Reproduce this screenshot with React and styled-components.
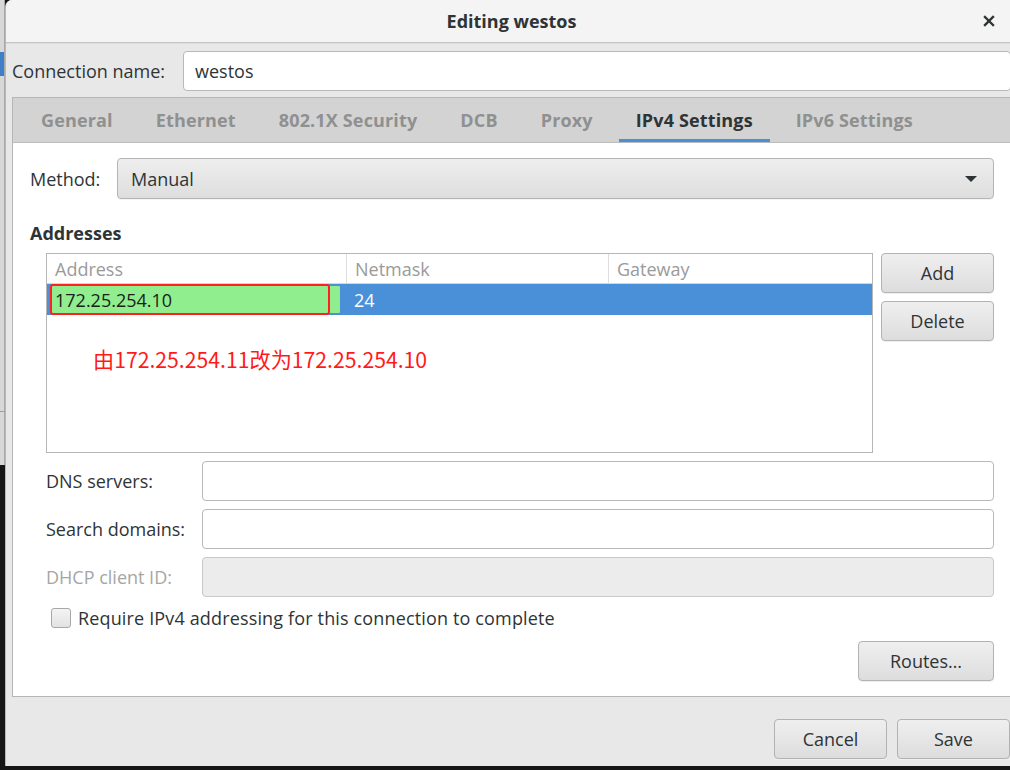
import React from 'react';
import styled, { createGlobalStyle } from 'styled-components';

const GlobalStyle = createGlobalStyle`
  html, body {
    margin: 0;
    padding: 0;
    overflow: hidden;
    background: #161616;
  }
  * {
    box-sizing: border-box;
  }
`;

const Screen = styled.div`
  width: 1010px;
  height: 770px;
  display: flex;
  overflow: hidden;
  background: #161616;
  font-family: 'Open Sans', 'Noto Sans', sans-serif;
  font-size: 18px;
  color: #2e3436;
`;

const BackWindow = styled.div`
  width: 5px;
  flex-shrink: 0;
  height: 465px;
  display: flex;
  flex-direction: column;
  background: #d8d8d8;
  border-right: 1px solid #a8a8a8;
`;

const BackStripe = styled.div`
  margin-top: ${p => p.top}px;
  height: ${p => p.h}px;
  background: ${p => p.color};
`;

const Dialog = styled.div`
  width: 1012px;
  height: 766px;
  flex-shrink: 0;
  display: flex;
  flex-direction: column;
  background: #e8e8e8;
  border-left: 1px solid #b8b8b8;
  border-radius: 7px 0 0 0;
  overflow: hidden;
`;

const TitleBar = styled.div`
  height: 43px;
  flex-shrink: 0;
  display: flex;
  align-items: center;
  justify-content: center;
  position: relative;
  background: #f4f4f4;
  border-bottom: 1px solid #c4c4c4;
  box-shadow: 0 1px 0 #dcdcdc;
`;

const Title = styled.div`
  font-weight: 700;
  font-size: 18px;
  color: #2e3436;
`;

const CloseButton = styled.div`
  position: absolute;
  right: 22px;
  top: 15px;
  width: 12px;
  height: 12px;
  display: flex;
`;

const Body = styled.div`
  flex: 1;
  display: flex;
  flex-direction: column;
  padding: 7px 0 0 6px;
`;

const NameRow = styled.div`
  display: flex;
  align-items: center;
  padding-right: 6px;
  height: 41px;
`;

const NameLabel = styled.div`
  width: 171px;
  flex-shrink: 0;
`;

const Entry = styled.div`
  flex: 1;
  height: 40px;
  display: flex;
  align-items: center;
  padding: 0 11px;
  background: ${p => (p.disabled ? '#ececec' : '#ffffff')};
  border: 1px solid ${p => (p.disabled ? '#c8c8c8' : '#b8b8b8')};
  border-radius: 4px;
  color: #2e3436;
`;

const Notebook = styled.div`
  margin-top: 6px;
  height: 600px;
  display: flex;
  flex-direction: column;
  border: 1px solid #b6b6b6;
  border-right: none;
  background: #ffffff;
`;

const TabBar = styled.div`
  height: 45px;
  flex-shrink: 0;
  display: flex;
  align-items: stretch;
  gap: 9px;
  padding-left: 11px;
  background: #d3d3d3;
  border-bottom: 1px solid #bdbdbd;
`;

const Tab = styled.div`
  display: flex;
  align-items: center;
  padding: 0 17px;
  font-weight: 700;
  letter-spacing: 0.15px;
  color: ${p => (p.active ? '#2e3436' : '#8f9090')};
  box-shadow: ${p => (p.active ? 'inset 0 -3px 0 #4a90d9' : 'none')};
`;

const Panel = styled.div`
  flex: 1;
  display: flex;
  flex-direction: column;
  padding: 15px 23px 0 17px;
`;

const MethodRow = styled.div`
  display: flex;
  align-items: center;
`;

const MethodLabel = styled.div`
  width: 87px;
  flex-shrink: 0;
`;

const Combo = styled.div`
  flex: 1;
  height: 41px;
  display: flex;
  align-items: center;
  justify-content: space-between;
  padding: 0 16px 0 13px;
  border: 1px solid #b4b4b4;
  border-radius: 4px;
  background: linear-gradient(#eeeeee, #dedede);
  box-shadow: 0 1px 0 #f4f4f4;
`;

const Caret = styled.div`
  width: 0;
  height: 0;
  border-left: 6px solid transparent;
  border-right: 6px solid transparent;
  border-top: 6px solid #2e3436;
`;

const SectionHeading = styled.div`
  margin-top: 22px;
  font-weight: 700;
  line-height: 24px;
`;

const AddressArea = styled.div`
  margin-top: 8px;
  margin-left: 16px;
  display: flex;
  gap: 8px;
  align-items: flex-start;
`;

const Table = styled.div`
  width: 827px;
  height: 200px;
  flex-shrink: 0;
  display: flex;
  flex-direction: column;
  border: 1px solid #b6b6b6;
  background: #ffffff;
  position: relative;
`;

const TableRow = styled.div`
  height: ${p => p.h}px;
  display: grid;
  grid-template-columns: 299px 262px 1fr;
  background: ${p => (p.selected ? '#4a90d9' : 'transparent')};
  border-bottom: ${p => (p.header ? '1px solid #d6d6d6' : 'none')};
`;

const HeaderCell = styled.div`
  display: flex;
  align-items: center;
  padding-left: 8px;
  color: #9a9a9a;
  border-left: ${p => (p.first ? 'none' : '1px solid #dedede')};
`;

const Cell = styled.div`
  display: flex;
  align-items: center;
  padding-left: ${p => (p.edit ? '0' : '8px')};
  color: ${p => (p.edit ? '#1c1c1c' : '#ffffff')};
`;

const EditBox = styled.div`
  width: 280px;
  height: 31px;
  margin-left: 3px;
  display: flex;
  align-items: center;
  padding-left: 3px;
  background: #90ee8f;
  border: 2px solid #ff2020;
  border-radius: 3px;
  box-shadow: 12px 0 0 -2px #90ee8f;
`;

const Note = styled.div`
  position: absolute;
  left: 46px;
  top: 89px;
  font-family: 'Noto Sans CJK SC', 'Noto Sans', sans-serif;
  font-size: 21.2px;
  color: #ff1a1a;
`;

const SideButtons = styled.div`
  display: flex;
  flex-direction: column;
  gap: 8px;
  flex: 1;
`;

const Button = styled.div`
  width: ${p => (p.w ? `${p.w}px` : 'auto')};
  height: 40px;
  display: flex;
  align-items: center;
  justify-content: center;
  border: 1px solid #b2b2b2;
  border-radius: 4px;
  background: linear-gradient(#efefef, #dddddd);
  color: #2e3436;
  box-shadow: 0 1px 0 #f0f0f0;
`;

const FieldRow = styled.div`
  margin-top: 8px;
  margin-left: 16px;
  display: flex;
  align-items: center;
`;

const FieldLabel = styled.div`
  width: 156px;
  flex-shrink: 0;
  color: ${p => (p.disabled ? '#a4a6a6' : '#2e3436')};
`;

const CheckRow = styled.div`
  margin-top: 10px;
  margin-left: 21px;
  display: flex;
  align-items: center;
  gap: 7px;
  height: 22px;
  letter-spacing: 0.15px;
`;

const CheckBox = styled.div`
  width: 20px;
  height: 20px;
  border: 1px solid #a8a8a8;
  border-radius: 3px;
  background: linear-gradient(#f4f4f4, #e2e2e2);
`;

const RoutesRow = styled.div`
  margin-top: 12px;
  display: flex;
  justify-content: flex-end;
`;

const Footer = styled.div`
  flex: 1;
  display: flex;
  justify-content: flex-end;
  align-items: flex-end;
  gap: 10px;
  padding: 0 7px 7px 0;
`;

const tabs = ['General', 'Ethernet', '802.1X Security', 'DCB', 'Proxy', 'IPv4 Settings', 'IPv6 Settings'];

const App = () => {
  return (
    <Screen>
      <GlobalStyle />
      <BackWindow>
        <BackStripe top={52} h={24} color="#3f7fc8" />
        <BackStripe top={335} h={1} color="#9c9c9c" />
      </BackWindow>
      <Dialog>
        <TitleBar>
          <Title>Editing westos</Title>
          <CloseButton>
            <svg width="12" height="12" viewBox="0 0 12 12">
              <path d="M2 2 L10 10 M10 2 L2 10" stroke="#2e3436" strokeWidth="2.4" strokeLinecap="square" />
            </svg>
          </CloseButton>
        </TitleBar>
        <Body>
          <NameRow>
            <NameLabel>Connection name:</NameLabel>
            <Entry>westos</Entry>
          </NameRow>
          <Notebook>
            <TabBar>
              {tabs.map(t => (
                <Tab key={t} active={t === 'IPv4 Settings'}>{t}</Tab>
              ))}
            </TabBar>
            <Panel>
              <MethodRow>
                <MethodLabel>Method:</MethodLabel>
                <Combo>
                  <span>Manual</span>
                  <Caret />
                </Combo>
              </MethodRow>
              <SectionHeading>Addresses</SectionHeading>
              <AddressArea>
                <Table>
                  <TableRow h={30} header>
                    <HeaderCell first>Address</HeaderCell>
                    <HeaderCell>Netmask</HeaderCell>
                    <HeaderCell>Gateway</HeaderCell>
                  </TableRow>
                  <TableRow h={31} selected>
                    <Cell edit>
                      <EditBox>172.25.254.10</EditBox>
                    </Cell>
                    <Cell>24</Cell>
                    <Cell />
                  </TableRow>
                  <Note>由172.25.254.11改为172.25.254.10</Note>
                </Table>
                <SideButtons>
                  <Button>Add</Button>
                  <Button>Delete</Button>
                </SideButtons>
              </AddressArea>
              <FieldRow>
                <FieldLabel>DNS servers:</FieldLabel>
                <Entry />
              </FieldRow>
              <FieldRow>
                <FieldLabel>Search domains:</FieldLabel>
                <Entry />
              </FieldRow>
              <FieldRow>
                <FieldLabel disabled>DHCP client ID:</FieldLabel>
                <Entry disabled />
              </FieldRow>
              <CheckRow>
                <CheckBox />
                <span>Require IPv4 addressing for this connection to complete</span>
              </CheckRow>
              <RoutesRow>
                <Button w={136}>Routes…</Button>
              </RoutesRow>
            </Panel>
          </Notebook>
          <Footer>
            <Button w={113}>Cancel</Button>
            <Button w={113}>Save</Button>
          </Footer>
        </Body>
      </Dialog>
    </Screen>
  );
};

export default App;
